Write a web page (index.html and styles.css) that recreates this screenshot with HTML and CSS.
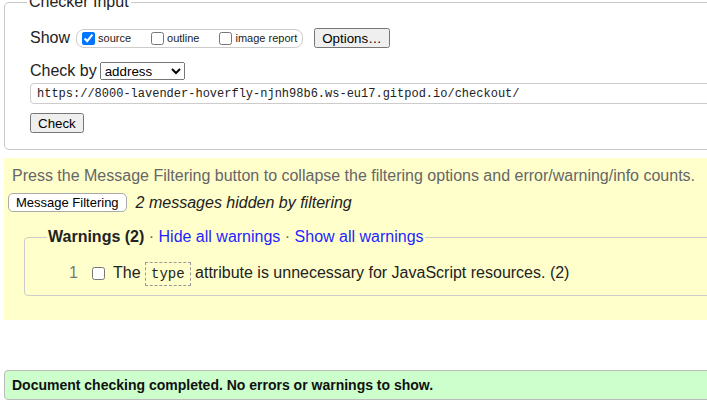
FILE: index.html
```html
<!DOCTYPE html>
<html lang="en">
<head>
<meta charset="utf-8">
<title>Nu Html Checker</title>
<link rel="stylesheet" href="styles.css">
</head>
<body>
<fieldset class="checker">
  <legend class="checker-legend">Checker Input</legend>
  <div class="show-row">
    <span class="row-label">Show</span>
    <span class="show-group">
      <label class="opt"><input type="checkbox" checked>source</label>
      <label class="opt"><input type="checkbox">outline</label>
      <label class="opt"><input type="checkbox">image report</label>
    </span>
    <button type="button" class="btn btn-options">Options…</button>
  </div>
  <div class="checkby-row">
    <span class="row-label">Check by</span>
    <select class="select"><option>address</option></select>
  </div>
  <input class="url" type="text" value="https://8000-lavender-hoverfly-njnh98b6.ws-eu17.gitpod.io/checkout/">
  <div class="submit-row"><button type="button" class="btn btn-check">Check</button></div>
</fieldset>

<section class="filters">
  <p class="filters-hint">Press the Message Filtering button to collapse the filtering options and error/warning/info counts.</p>
  <div class="filters-row">
    <button type="button" class="btn-filter">Message Filtering</button>
    <em class="hidden-count">2 messages hidden by filtering</em>
  </div>
  <fieldset class="group">
    <legend class="group-legend"><strong>Warnings (2)</strong> · <a href="#">Hide all warnings</a> · <a href="#">Show all warnings</a></legend>
    <div class="msg">
      <span class="msg-num">1</span>
      <input type="checkbox" class="msg-check">
      <span class="msg-text">The <code class="code">type</code> attribute is unnecessary for JavaScript resources. (2)</span>
    </div>
  </fieldset>
</section>

<p class="success">Document checking completed. No errors or warnings to show.</p>
</body>
</html>
```

FILE: styles.css
```css
html {
  overflow: hidden;
}

body {
  margin: 0;
  padding: 0 0 0 4px;
  width: 800px;
  font-family: "Liberation Sans", Arial, sans-serif;
  font-size: 16px;
  color: #222;
  background: #fff;
}

.checker {
  margin: -7px 0 0 0;
  padding: 17px 0 16px 25px;
  border: 1px solid #c8c8c8;
  border-radius: 5px;
  min-width: 0;
}

.checker-legend {
  font-size: 16px;
  line-height: 18px;
  padding: 0 2px;
  margin-left: -3px;
  color: #222;
}

.show-row {
  display: flex;
  align-items: center;
  height: 20px;
}

.row-label {
  line-height: 18px;
}

.show-group {
  display: inline-flex;
  align-items: center;
  height: 17px;
  margin-left: 6px;
  padding: 0 5px 0 1px;
  gap: 16px;
  border: 1px solid #ccc;
  border-radius: 8px;
  font-size: 11px;
}

.opt {
  display: inline-flex;
  align-items: center;
}

.opt input {
  margin: 0 3px 0 4px;
}

.btn {
  height: 20px;
  padding: 0 6px;
  font-family: "Liberation Sans", Arial, sans-serif;
  font-size: 13.33px;
}

.btn-options {
  margin-left: 11px;
}

.checkby-row {
  display: flex;
  align-items: center;
  height: 18px;
  margin-top: 14px;
}

.select {
  margin-left: 3px;
  width: 85px;
  height: 18px;
  font-family: "Liberation Sans", Arial, sans-serif;
  font-size: 13.33px;
}

.url {
  display: block;
  box-sizing: border-box;
  margin-top: 3px;
  width: 760px;
  height: 21px;
  padding: 0 6px;
  border: 1px solid #ccc;
  border-radius: 4px;
  font-family: "Liberation Mono", monospace;
  font-size: 12px;
  color: #222;
}

.submit-row {
  margin-top: 9px;
  height: 20px;
}

.filters {
  margin-top: 8px;
  padding: 9px 0 24px 4px;
  background: #ffc;
}

.filters-hint {
  margin: 0 0 0 4px;
  line-height: 18px;
  color: #666;
}

.filters-row {
  display: flex;
  align-items: center;
  gap: 9px;
  margin-top: 8px;
  height: 19px;
}

.btn-filter {
  box-sizing: border-box;
  height: 19px;
  padding: 0 7px;
  border: 1px solid #aaa;
  border-radius: 5px;
  background: #fff;
  color: #000;
  font-family: "Liberation Sans", Arial, sans-serif;
  font-size: 13px;
}

.hidden-count {
  line-height: 18px;
}

.group {
  margin: 16px 0 0 16px;
  padding: 15px 0 10px 22px;
  border: 1px solid #ccc;
  border-radius: 4px;
  min-width: 0;
}

.group-legend {
  line-height: 18px;
  padding: 0 1px;
  color: #666;
}

.group-legend strong {
  color: #222;
}

.group-legend a {
  color: #1f1fff;
  text-decoration: none;
}

.msg {
  display: flex;
  align-items: center;
  height: 24px;
  margin-left: 22px;
  line-height: 18px;
}

.msg-num {
  width: 19px;
  color: #777;
}

.msg-check {
  margin: 0 3px 0 4px;
}

.msg-text {
  margin-left: 5px;
  color: #222;
}

.code {
  font-family: "Liberation Mono", monospace;
  font-size: 14px;
  padding: 3px 5px;
  border: 1px dashed #999;
}

.success {
  box-sizing: border-box;
  margin: 50px 0 0 0;
  height: 30px;
  padding-left: 7px;
  border: 1px solid #bbb;
  border-radius: 4px;
  background: #cfc;
  font-size: 14px;
  font-weight: bold;
  line-height: 28px;
  color: #111;
}
```
